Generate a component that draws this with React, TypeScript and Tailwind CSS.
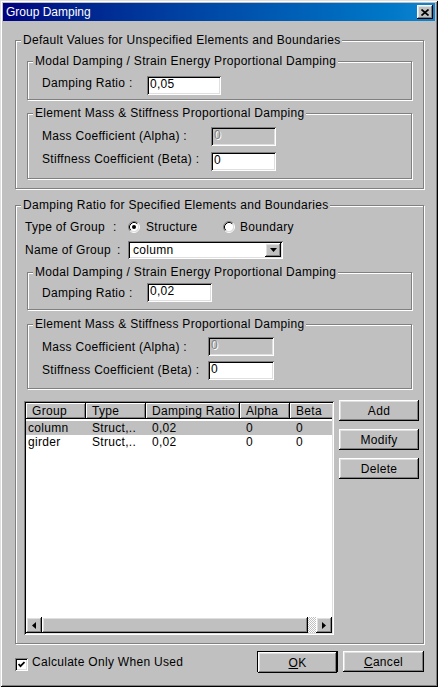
import * as React from "react";

// classic 3d edges
const raised =
  "shadow-[inset_-1px_-1px_0_#000,inset_1px_1px_0_#fff,inset_-2px_-2px_0_#808080,inset_2px_2px_0_#dfdfdf]";
const sunken =
  "shadow-[inset_1px_1px_0_#808080,inset_-1px_-1px_0_#fff,inset_2px_2px_0_#000,inset_-2px_-2px_0_#dfdfdf]";

function GroupBox({
  title,
  className = "",
  children,
}: {
  title: string;
  className?: string;
  children?: React.ReactNode;
}) {
  return (
    <div
      className={`flex flex-col border border-[#808080] shadow-[inset_1px_1px_0_#fff,1px_1px_0_#fff] ${className}`}
    >
      <div className="-mt-[8px] ml-[5px] w-fit whitespace-nowrap bg-[#c0c0c0] px-[2px] leading-[14px]">
        {title}
      </div>
      {children}
    </div>
  );
}

function Field({
  value,
  w,
  disabled = false,
}: {
  value: string;
  w: string;
  disabled?: boolean;
}) {
  return (
    <div
      className={`h-[19px] shrink-0 pl-[3px] pt-[2px] leading-[12px] ${w} ${sunken} ${
        disabled ? "bg-[#c0c0c0] text-[#808080] [text-shadow:1px_1px_0_#fff]" : "bg-white"
      }`}
    >
      {value}
    </div>
  );
}

function FieldRow({
  label,
  labelW,
  labelMt,
  value,
  fieldW,
  disabled,
  className = "",
}: {
  label: string;
  labelW: string;
  labelMt: string;
  value: string;
  fieldW: string;
  disabled?: boolean;
  className?: string;
}) {
  return (
    <div className={`flex items-start pl-[14px] ${className}`}>
      <div className={`shrink-0 whitespace-nowrap leading-[14px] ${labelW} ${labelMt}`}>{label}</div>
      <Field value={value} w={fieldW} disabled={disabled} />
    </div>
  );
}

function Radio({ checked }: { checked: boolean }) {
  return (
    <svg width="12" height="12" viewBox="0 0 12 12" className="shrink-0">
      <circle cx="6" cy="6" r="4.5" fill="#fff" />
      <path d="M2.11 9.89 A5.5 5.5 0 0 1 9.89 2.11" fill="none" stroke="#808080" />
      <path d="M9.89 2.11 A5.5 5.5 0 0 1 2.11 9.89" fill="none" stroke="#fff" />
      <path d="M2.82 9.18 A4.5 4.5 0 0 1 9.18 2.82" fill="none" stroke="#000" />
      <path d="M9.18 2.82 A4.5 4.5 0 0 1 2.82 9.18" fill="none" stroke="#dfdfdf" />
      {checked && <circle cx="6" cy="6" r="2" fill="#000" />}
    </svg>
  );
}

function Btn({
  children,
  className = "",
}: {
  children: React.ReactNode;
  className?: string;
}) {
  return (
    <div className={`flex h-[21px] items-center justify-center leading-[14px] ${raised} ${className}`}>
      {children}
    </div>
  );
}

const columns = [
  { name: "Group", w: "w-[60px]" },
  { name: "Type", w: "w-[60px]" },
  { name: "Damping Ratio", w: "w-[94px]" },
  { name: "Alpha", w: "w-[50px]" },
  { name: "Beta", w: "w-[60px]" },
];

const rows = [
  ["column", "Struct,..", "0,02", "0", "0"],
  ["girder", "Struct,..", "0,02", "0", "0"],
];

export default function App() {
  return (
    <div className="h-[687px] w-[438px] bg-[#c0c0c0] p-[3px] font-['Liberation_Sans',Arial,sans-serif] text-[12px] tracking-[0.3px] text-black shadow-[inset_1px_1px_0_#dfdfdf,inset_-1px_-1px_0_#000,inset_2px_2px_0_#fff,inset_-2px_-2px_0_#808080]">
      {/* title bar */}
      <div className="flex h-[18px] items-center justify-between bg-linear-to-r from-[#000080] to-[#1084d0] pl-[3px] pr-[2px] tracking-normal">
        <span className="leading-[14px] text-white">Group Damping</span>
        <div className={`flex h-[14px] w-[16px] items-center justify-center bg-[#c0c0c0] ${raised}`}>
          <svg width="8" height="7" viewBox="0 0 8 7">
            <path d="M0.5 0.5 L7.5 6.5 M7.5 0.5 L0.5 6.5" stroke="#000" strokeWidth="1.7" />
          </svg>
        </div>
      </div>

      <div className="flex flex-col pl-[12px] pr-[11px]">
        <GroupBox className="mt-[19px] pb-[9px]" title="Default Values for Unspecified Elements and Boundaries">
          <GroupBox className="mx-[11px] mt-[14px] pb-[4px]" title="Modal Damping / Strain Energy Proportional Damping">
            <FieldRow className="mt-[8px]" label="Damping Ratio :" labelW="w-[105px]" labelMt="mt-0" value="0,05" fieldW="w-[74px]" />
          </GroupBox>
          <GroupBox className="mx-[11px] mt-[13px] pb-[7px]" title="Element Mass & Stiffness Proportional Damping">
            <FieldRow className="mt-[7px]" label="Mass Coefficient (Alpha) :" labelW="w-[169px]" labelMt="mt-[2px]" value="0" fieldW="w-[65px]" disabled />
            <FieldRow className="mt-[6px]" label="Stiffness Coefficient (Beta) :" labelW="w-[169px]" labelMt="mt-0" value="0" fieldW="w-[65px]" />
          </GroupBox>
        </GroupBox>

        <GroupBox className="mt-[16px] pb-[8px]" title="Damping Ratio for Specified Elements and Boundaries">
          <div className="ml-[9px] mt-[7px] flex h-[16px] items-center leading-[14px]">
            <span className="w-[88px] shrink-0">Type of Group</span>
            <span className="w-[15px] shrink-0">:</span>
            <Radio checked />
            <span className="ml-[6px] w-[77px] shrink-0">Structure</span>
            <Radio checked={false} />
            <span className="ml-[5px]">Boundary</span>
          </div>
          <div className="ml-[9px] mt-[6px] flex h-[18px] items-center leading-[14px]">
            <span className="w-[92px] shrink-0">Name of Group</span>
            <span className="w-[11px] shrink-0">:</span>
            <div className={`flex h-[18px] w-[155px] items-center justify-between bg-white p-[2px] ${sunken}`}>
              <span className="pl-[3px]">column</span>
              <div className={`flex h-[14px] w-[16px] items-center justify-center bg-[#c0c0c0] ${raised}`}>
                <svg width="7" height="4" viewBox="0 0 7 4">
                  <polygon points="0,0 7,0 3.5,4" fill="#000" />
                </svg>
              </div>
            </div>
          </div>

          <GroupBox className="mx-[11px] mt-[13px] pb-[7px]" title="Modal Damping / Strain Energy Proportional Damping">
            <FieldRow className="mt-[4px]" label="Damping Ratio  :" labelW="w-[105px]" labelMt="mt-[3px]" value="0,02" fieldW="w-[65px]" />
          </GroupBox>
          <GroupBox className="mx-[11px] mt-[14px] pb-[8px]" title="Element Mass & Stiffness Proportional Damping">
            <FieldRow className="mt-[6px]" label="Mass Coefficient (Alpha) :" labelW="w-[166px]" labelMt="mt-[3px]" value="0" fieldW="w-[66px]" disabled />
            <FieldRow className="mt-[5px]" label="Stiffness Coefficient (Beta) :" labelW="w-[166px]" labelMt="mt-[2px]" value="0" fieldW="w-[66px]" />
          </GroupBox>

          <div className="ml-[8px] mt-[12px] flex items-start gap-[5px]">
            <div className={`flex h-[234px] w-[310px] shrink-0 flex-col bg-white p-[2px] ${sunken}`}>
              <div className="flex h-[16px] shrink-0 overflow-hidden">
                {columns.map((c) => (
                  <div
                    key={c.name}
                    className={`shrink-0 bg-[#c0c0c0] pl-[6px] pt-[1px] leading-[14px] whitespace-nowrap shadow-[inset_-1px_-1px_0_#000,inset_1px_1px_0_#fff,inset_-2px_-2px_0_#808080] ${c.w}`}
                  >
                    {c.name}
                  </div>
                ))}
              </div>
              <div className="mt-[2px] flex flex-col overflow-hidden">
                {rows.map((r, i) => (
                  <div key={r[0]} className={`flex h-[14px] leading-[14px] ${i === 0 ? "bg-[#c0c0c0]" : ""}`}>
                    {r.map((v, j) => (
                      <div key={j} className={`shrink-0 whitespace-nowrap ${columns[j].w} ${j === 0 ? "pl-[2px]" : "pl-[6px]"}`}>
                        {v}
                      </div>
                    ))}
                  </div>
                ))}
              </div>
              {/* horizontal scrollbar */}
              <div className="mt-auto flex h-[16px] shrink-0">
                <div className={`flex w-[16px] items-center justify-center bg-[#c0c0c0] ${raised}`}>
                  <svg width="4" height="7" viewBox="0 0 4 7">
                    <polygon points="4,0 4,7 0,3.5" fill="#000" />
                  </svg>
                </div>
                <div className={`w-[266px] bg-[#c0c0c0] ${raised}`} />
                <div className="flex-1 bg-[repeating-conic-gradient(#c0c0c0_0_25%,#fff_0_50%)] bg-[length:2px_2px]" />
                <div className={`flex w-[16px] items-center justify-center bg-[#c0c0c0] ${raised}`}>
                  <svg width="4" height="7" viewBox="0 0 4 7">
                    <polygon points="0,0 0,7 4,3.5" fill="#000" />
                  </svg>
                </div>
              </div>
            </div>
            <div className="-mt-[1px] flex w-[80px] flex-col gap-[8px]">
              <Btn>Add</Btn>
              <Btn>Modify</Btn>
              <Btn>Delete</Btn>
            </div>
          </div>
        </GroupBox>

        <div className="mt-[7px] flex items-start">
          <div className={`mt-[7px] flex h-[13px] w-[13px] shrink-0 items-center justify-center bg-white ${sunken}`}>
            <svg width="7" height="7" viewBox="0 0 7 7">
              <path d="M0.5 3 L2.5 5.2 L6.5 1" fill="none" stroke="#000" strokeWidth="1.8" />
            </svg>
          </div>
          <span className="ml-[4px] mt-[4px] leading-[14px]">Calculate Only When Used</span>
          <div className="ml-auto flex gap-[5px]">
            <div className="h-[21px] w-[81px] border border-black">
              <Btn className="h-[19px]">
                <span>
                  <span className="underline">O</span>K
                </span>
              </Btn>
            </div>
            <Btn className="w-[81px]">
              <span>
                <span className="underline">C</span>ancel
              </span>
            </Btn>
          </div>
        </div>
      </div>
    </div>
  );
}
